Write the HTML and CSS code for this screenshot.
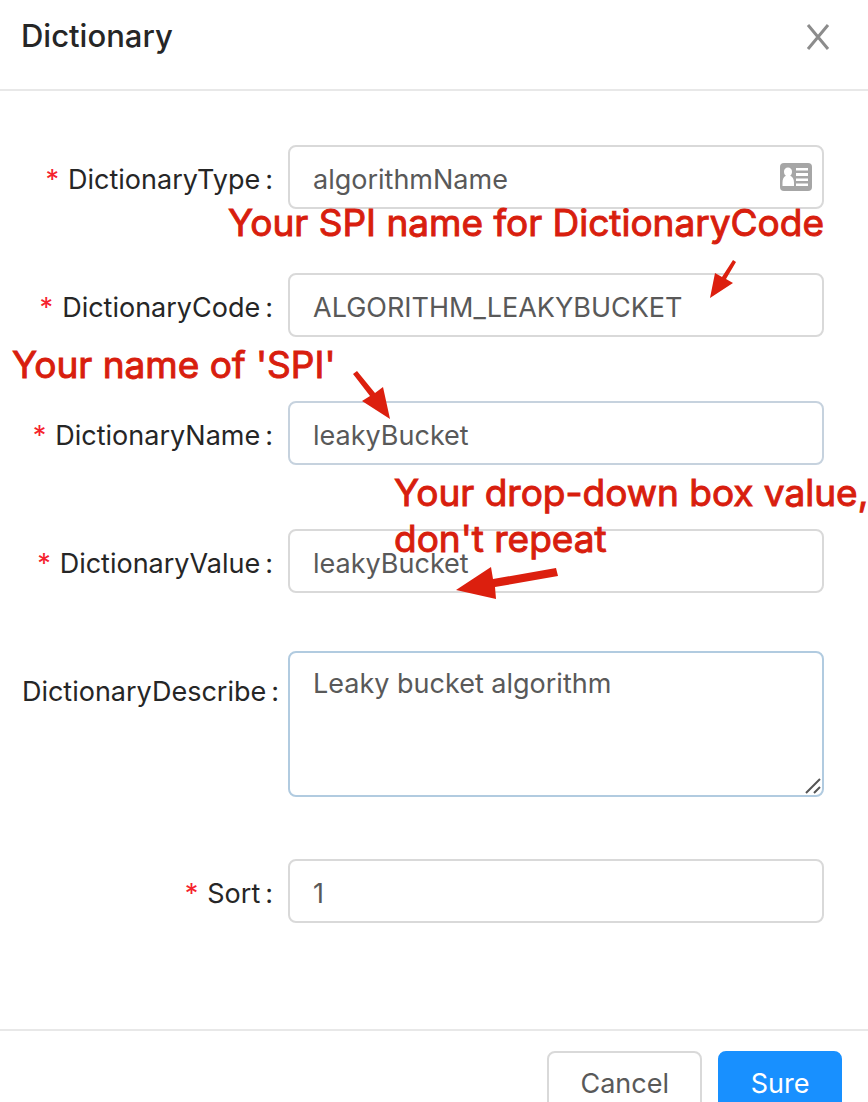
FILE: index.html
```
<!DOCTYPE html>
<html lang="en">
<head>
<meta charset="utf-8">
<meta name="viewport" content="width=device-width, initial-scale=1">
<title>Dictionary</title>
<link rel="stylesheet" href="styles.css">
</head>
<body>
<main class="dialog">
  <header class="dialog-header">
    <h1 class="dialog-title">Dictionary</h1>
    <button class="close" type="button" aria-label="Close">
      <svg width="24" height="26" viewBox="0 0 24 26" fill="none" stroke="#8c8c8c" stroke-width="3"><path d="M2 1 22 25M22 1 2 25"/></svg>
    </button>
  </header>

  <form class="dialog-body" id="dictionary-form">
    <div class="row">
      <label class="label required" for="type">DictionaryType</label>
      <div class="control">
        <input class="field" id="type" type="text" value="algorithmName">
        <svg class="card-icon" width="32" height="28" viewBox="0 0 32 28">
          <rect width="32" height="28" rx="4" fill="#a6a6a6"/>
          <path fill="#fff" d="M8 4.500a4 4 0 0 1 4 4.200c0 1.800-.7 3.200-1.800 4.100 2.500 1 3.800 3.400 3.800 6.700V23H2.500v-3.500c0-3.300 1.100-5.700 3.400-6.700C4.700 11.900 4 10.500 4 8.700a4 4 0 0 1 4-4.200ZM16 5h12v2.500H16zM16 10h12v3H16zM16 15.500h12V18H16zM16 20.500h12V23H16z"/>
        </svg>
      </div>
      <p class="note note-code">Your SPI name for DictionaryCode</p>
    </div>

    <div class="row">
      <label class="label required" for="code">DictionaryCode</label>
      <div class="control">
        <input class="field" id="code" type="text" value="ALGORITHM_LEAKYBUCKET">
      </div>
      <svg class="arrow arrow-code" width="28" height="40" viewBox="0 0 28 40"><path fill="#dc1f0e" d="M24 0 27 2 17 19 24 23 1 38 6 13 13 17Z"/></svg>
      <p class="note note-name">Your name of 'SPI'</p>
    </div>

    <div class="row">
      <label class="label required" for="name">DictionaryName</label>
      <div class="control">
        <input class="field field-hover" id="name" type="text" value="leakyBucket">
      </div>
      <svg class="arrow arrow-name" width="40" height="50" viewBox="0 0 40 50"><path fill="#dc1f0e" d="M0 3 4 0 22 22 30 16 37 48 9 30 17 25Z"/></svg>
      <p class="note note-value">Your drop-down box value,<br>don't repeat</p>
    </div>

    <div class="row">
      <label class="label required" for="value">DictionaryValue</label>
      <div class="control">
        <input class="field" id="value" type="text" value="leakyBucket">
      </div>
      <svg class="arrow arrow-value" width="104" height="34" viewBox="0 0 104 34"><path fill="#dc1f0e" d="M0 23 35 0 37 12 100 1 102 9 39 20 40 32Z"/></svg>
    </div>

    <div class="row row-area">
      <label class="label label-long" for="describe">DictionaryDescribe</label>
      <div class="control">
        <textarea class="field area" id="describe">Leaky bucket algorithm</textarea>
        <svg class="grip" width="16" height="16" viewBox="0 0 16 16" fill="none" stroke="#555" stroke-width="2"><path d="M1 15 15 1M9 15l6-6"/></svg>
      </div>
    </div>

    <div class="row">
      <label class="label required" for="sort">Sort</label>
      <div class="control">
        <input class="field" id="sort" type="text" inputmode="numeric" value="1">
      </div>
    </div>
  </form>

  <footer class="dialog-footer">
    <button class="button" type="button">Cancel</button>
    <button class="button button-primary" type="submit" form="dictionary-form">Sure</button>
  </footer>
</main>
</body>
</html>
```
FILE: styles.css
```
* {
  box-sizing: border-box;
}

body {
  margin: 0;
  height: 100vh;
  overflow: hidden;
  background: #fff;
  color: #262626;
  font: 27px/40px Inter, "Liberation Sans", sans-serif;
}

.dialog-header {
  display: flex;
  justify-content: space-between;
  align-items: flex-start;
  padding: 16px 38px 33px 21px;
  border-bottom: 2px solid #e8e8e8;
}

.dialog-title {
  margin: 0;
  font-size: 31px;
  font-weight: 500;
  line-height: 40px;
}

.close {
  display: flex;
  align-items: center;
  height: 42px;
  margin-bottom: -2px;
  padding: 0;
  border: 0;
  background: none;
}

.dialog-body {
  display: flex;
  flex-direction: column;
  gap: 64px;
  padding: 54px 44px 106px 0;
}

.row {
  position: relative;
  display: grid;
  grid-template-columns: 288px 1fr;
  align-items: start;
}

.label {
  padding: 15px 15px 0 0;
  line-height: 40px;
  text-align: right;
  white-space: nowrap;
}

.label::after {
  content: ":";
  margin-left: 5px;
}

.required::before {
  content: "*";
  margin-right: 9px;
  color: #f5222d;
}

.label-long {
  padding-top: 21px;
  padding-right: 9px;
}

.control {
  position: relative;
  display: flex;
}

.field {
  width: 100%;
  height: 64px;
  padding: 4px 23px 0;
  border: 2px solid #d9d9d9;
  border-radius: 8px;
  outline: 0;
  background: #fff;
  color: #595959;
  font: inherit;
}

.field-hover {
  border-color: #c6d2de;
}

.row-area {
  margin: -6px 0 -2px;
}

.area {
  height: 146px;
  padding-top: 11px;
  border-color: #b1cbe0;
  resize: none;
}

.card-icon {
  position: absolute;
  top: 18px;
  right: 12px;
}

.grip {
  position: absolute;
  right: 3px;
  bottom: 3px;
}

.note {
  position: absolute;
  z-index: 1;
  margin: 0;
  color: #d81e0e;
  font-size: 37px;
  line-height: 46px;
  white-space: nowrap;
  -webkit-text-stroke: 1px #d81e0e;
}

.note-code {
  top: 55px;
  left: 228px;
}

.note-name {
  top: 69px;
  left: 12px;
}

.note-value {
  top: 69px;
  left: 394px;
}

.arrow {
  position: absolute;
  z-index: 1;
}

.arrow-code {
  top: -13px;
  left: 709px;
}

.arrow-name {
  top: -30px;
  left: 353px;
}

.arrow-value {
  top: 38px;
  left: 456px;
}

.dialog-footer {
  display: flex;
  justify-content: flex-end;
  gap: 16px;
  padding: 20px 26px;
  border-top: 2px solid #e8e8e8;
}

.button {
  height: 64px;
  padding: 2px 31px 0;
  border: 2px solid #d9d9d9;
  border-radius: 8px;
  background: #fff;
  color: #595959;
  font: inherit;
}

.button-primary {
  min-width: 124px;
  padding-inline: 30px;
  border-color: #1890ff;
  background: #1890ff;
  color: #fff;
}
```
